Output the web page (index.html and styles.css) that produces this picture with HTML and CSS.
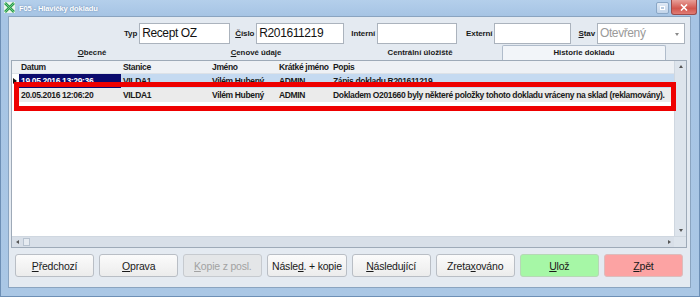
FILE: index.html
```html
<!DOCTYPE html>
<html lang="cs">
<head>
  <meta charset="UTF-8" />
  <title>F05 - Hlavičky dokladu</title>
  <link rel="stylesheet" href="styles.css">
</head>
<body>
  <div class="window">
    <div class="titlebar">
      <svg class="app-icon" width="11" height="11" viewBox="0 0 11 11">
        <rect x="0" y="0" width="11" height="11" fill="#e8f4ea"/>
        <path d="M1 1 L10 10 M10 1 L1 10" stroke="#2a9a4a" stroke-width="2.6"/>
        <path d="M1 1 L10 10 M10 1 L1 10" stroke="#7fd89a" stroke-width="0.8"/>
      </svg>
      <span class="title">F05 - Hlavičky dokladu</span>
      <div class="caption-btns">
        <span class="cap-btn restore"><span class="restore-box"></span></span>
        <span class="cap-btn close">
          <svg width="8" height="7" viewBox="0 0 8 7"><path d="M1 0.5 L7 6.5 M7 0.5 L1 6.5" stroke="#fff" stroke-width="1.6"/></svg>
        </span>
      </div>
    </div>

    <div class="client">
      <div class="header-fields">
        <span class="field-label">Typ</span>
        <div class="field big w-typ">Recept OZ</div>
        <span class="field-label gap5"><u>Č</u>íslo</span>
        <div class="field big w-cislo">R201611219</div>
        <span class="field-label gap7">Interní</span>
        <div class="field w-interni"></div>
        <span class="field-label gap9">Externí</span>
        <div class="field w-externi"></div>
        <span class="field-label gap7"><u>S</u>tav</span>
        <div class="field big select disabled w-stav">
          Otevřený
          <span class="drop-arrow"></span>
        </div>
      </div>

      <div class="tabs">
        <div class="tab"><u>O</u>becné</div>
        <div class="tab"><u>C</u>enové údaje</div>
        <div class="tab">Centrální úložiště</div>
        <div class="tab active">Historie dokladu</div>
      </div>

      <div class="grid">
        <div class="grid-body">
          <div class="grid-rows">
            <div class="row head">
              <span class="cell sel"></span>
              <span class="cell c-datum">Datum</span>
              <span class="cell c-stanice">Stanice</span>
              <span class="cell c-jmeno">Jméno</span>
              <span class="cell c-kratke">Krátké jméno</span>
              <span class="cell c-popis">Popis</span>
            </div>
            <div class="row current">
              <span class="cell sel"><span class="pointer"></span></span>
              <span class="cell c-datum focused">19.05.2016 13:29:36</span>
              <span class="cell c-stanice">VILDA1</span>
              <span class="cell c-jmeno">Vilém Hubený</span>
              <span class="cell c-kratke">ADMIN</span>
              <span class="cell c-popis">Zápis dokladu R201611219</span>
            </div>
            <div class="row alt">
              <span class="cell sel"></span>
              <span class="cell c-datum">20.05.2016 12:06:20</span>
              <span class="cell c-stanice">VILDA1</span>
              <span class="cell c-jmeno">Vilém Hubený</span>
              <span class="cell c-kratke">ADMIN</span>
              <span class="cell c-popis">Dokladem O201660 byly některé položky tohoto dokladu vráceny na sklad (reklamovány).</span>
            </div>
          </div>
          <div class="vscroll">
            <span class="sb-arrow up"></span>
            <span class="sb-track"></span>
            <span class="sb-arrow down"></span>
          </div>
        </div>
        <div class="hscroll">
          <span class="sb-arrow left"></span>
          <span class="sb-thumb"></span>
          <span class="sb-track"></span>
          <span class="sb-arrow right"></span>
          <span class="sb-corner"></span>
        </div>
        <div class="highlight"></div>
      </div>

      <div class="buttons">
        <button class="btn"><u>P</u>ředchozí</button>
        <button class="btn"><u>O</u>prava</button>
        <button class="btn" disabled><u>K</u>opie z posl.</button>
        <button class="btn">Násle<u>d</u>. + kopie</button>
        <button class="btn"><u>N</u>ásledující</button>
        <button class="btn">Zreta<u>x</u>ováno</button>
        <button class="btn save"><u>U</u>lož</button>
        <button class="btn back"><u>Z</u>pět</button>
      </div>
    </div>
  </div>
</body>
</html>
```

FILE: styles.css
```css
* { box-sizing: border-box; }
body {
  margin: 0;
  padding: 0;
  background: #fff;
  font-family: 'Liberation Sans', Arial, sans-serif;
}
.window {
  width: 700px;
  height: 297px;
  display: flex;
  flex-direction: column;
  padding: 0 8px 8px 7px;
  background: linear-gradient(#b4cfeb, #a6c4e4 16px, #aac7e5);
  border: 1px solid #6d8fb5;
  border-top: none;
}
.titlebar {
  height: 16px;
  display: flex;
  align-items: center;
  margin-left: -4px;
  margin-right: -6px;
}
.app-icon {
  margin-right: 4px;
  margin-top: -1px;
}
.title {
  font-size: 7.5px;
  font-weight: bold;
  color: #fff;
  text-shadow: 0 0 2px #5b7fa6;
  letter-spacing: -0.1px;
}
.caption-btns {
  margin-left: auto;
  display: flex;
  align-self: flex-start;
  gap: 2px;
}
.cap-btn {
  display: flex;
  align-items: center;
  justify-content: center;
}
.cap-btn.restore {
  width: 13px;
  height: 12px;
  margin-top: 2px;
  border: 1px solid #8aa7c6;
  border-radius: 2px;
  background: linear-gradient(#dfe9f5, #c3d5ea);
}
.restore-box {
  width: 5px;
  height: 4px;
  border: 1px solid #fff;
  background: #b8cbe0;
}
.cap-btn.close {
  width: 26px;
  height: 15px;
  border: 1px solid #9c4a4a;
  border-top: none;
  border-radius: 0 0 3px 3px;
  background: linear-gradient(#e8a09a, #d2564e 60%, #e07c74);
}

.client {
  flex: 1;
  display: flex;
  flex-direction: column;
  background: #e4eaf1;
  border: 1px solid #8aa4c0;
}
.header-fields {
  display: flex;
  justify-content: flex-end;
  align-items: center;
  padding: 5px 5px 0 0;
  height: 27px;
}
.field-label {
  font-size: 8px;
  font-weight: bold;
  color: #1a1a1a;
  margin-right: 2px;
  letter-spacing: -0.1px;
}
.gap5 { margin-left: 5px; }
.gap7 { margin-left: 7px; }
.gap9 { margin-left: 9px; }
.field {
  height: 21px;
  background: #fff;
  border: 1px solid #abb3bd;
  padding: 0 2px;
  display: flex;
  align-items: center;
  color: #111;
}
.field.big {
  font-size: 12px;
  letter-spacing: -0.4px;
}
.field.disabled { color: #9a9a9a; }
.field.select { position: relative; }
.drop-arrow {
  position: absolute;
  right: 5px;
  top: 9px;
  border-left: 2.5px solid transparent;
  border-right: 2.5px solid transparent;
  border-top: 3px solid #8a8a8a;
}
.w-typ { width: 91px; }
.w-cislo { width: 88px; }
.w-interni { width: 80px; }
.w-externi { width: 77px; }
.w-stav { width: 88px; }

.tabs {
  display: flex;
  height: 15px;
  margin: 1px 0 0 1px;
}
.tab {
  width: 164px;
  font-size: 7.8px;
  font-weight: bold;
  color: #1a1a1a;
  text-align: center;
  padding-top: 3px;
  letter-spacing: 0;
}
.tab.active {
  background: #f2f5f9;
  border: 1px solid #b0bccb;
  border-bottom: none;
  border-radius: 2px 2px 0 0;
  padding-top: 2px;
}

.grid {
  position: relative;
  height: 188px;
  margin: 0 3px 0 2px;
  border: 1px solid #9eaab8;
  background: #fff;
  display: flex;
  flex-direction: column;
}
.grid-body {
  flex: 1;
  display: flex;
}
.grid-rows {
  flex: 1;
}
.row {
  display: flex;
  height: 14px;
  font-size: 8.5px;
  font-weight: bold;
  color: #1a1a1a;
  letter-spacing: -0.35px;
  white-space: nowrap;
}
.row.head {
  background: #eef1f5;
  border-bottom: 1px solid #dde2e8;
  height: 13px;
}
.row.current { background: #c5daf1; }
.row.alt { background: #ebebeb; }
.cell {
  display: flex;
  align-items: center;
  padding-left: 2px;
  overflow: hidden;
}
.cell.sel {
  width: 7px;
  padding: 0;
  background: #fff;
}
.row.head .cell.sel { background: #eef1f5; }
.pointer {
  border-top: 3px solid transparent;
  border-bottom: 3px solid transparent;
  border-left: 4px solid #111;
  margin-left: 1px;
}
.c-datum { width: 102px; }
.c-stanice { width: 89px; }
.c-jmeno { width: 67px; }
.c-kratke { width: 54px; }
.c-popis { flex: 1; }
.cell.focused {
  background: #0b0b6e;
  color: #fff;
}

.vscroll {
  width: 12px;
  display: flex;
  flex-direction: column;
  background: #dde4ec;
  border-left: 1px solid #cfd7e0;
}
.sb-track { flex: 1; }
.sb-arrow {
  display: flex;
  align-items: center;
  justify-content: center;
  width: 11px;
  height: 11px;
}
.sb-arrow::after {
  content: "";
  border: 2.5px solid transparent;
}
.sb-arrow.up::after { border-bottom: 3px solid #555; border-top: none; }
.sb-arrow.down::after { border-top: 3px solid #555; border-bottom: none; }
.sb-arrow.left::after { border-right: 3px solid #555; border-left: none; }
.sb-arrow.right::after { border-left: 3px solid #555; border-right: none; }
.hscroll {
  height: 11px;
  display: flex;
  align-items: center;
  background: #d8dfe8;
  border-top: 1px solid #cfd7e0;
}
.hscroll .sb-arrow { height: 10px; width: 10px; }
.sb-thumb {
  width: 7px;
  height: 8px;
  margin-left: 1px;
  border: 1px solid #b8c3d0;
  background: #e6ebf1;
}
.sb-corner {
  width: 12px;
  height: 10px;
  background: #dde4ec;
}
.highlight {
  position: absolute;
  left: 2px;
  top: 21px;
  width: 662px;
  height: 29px;
  border: 5px solid #ee0000;
}

.buttons {
  display: flex;
  gap: 5px;
  margin: 6px 7px 0 6px;
}
.btn {
  flex: 1;
  height: 23px;
  font-family: 'Liberation Sans', Arial, sans-serif;
  font-size: 10.5px;
  color: #1a1a1a;
  border: 1px solid #b9bec5;
  border-radius: 3px;
  background: linear-gradient(#fbfbfb, #ececec);
  padding: 0;
  letter-spacing: -0.2px;
}
.btn:disabled {
  color: #a2a2a2;
  background: #e4e6e8;
  border-color: #c6cacf;
}
.btn.save {
  background: #a6f7a6;
  border-color: #b6d8b6;
}
.btn.back {
  background: #fca3a3;
  border-color: #dcbcbc;
}
```
